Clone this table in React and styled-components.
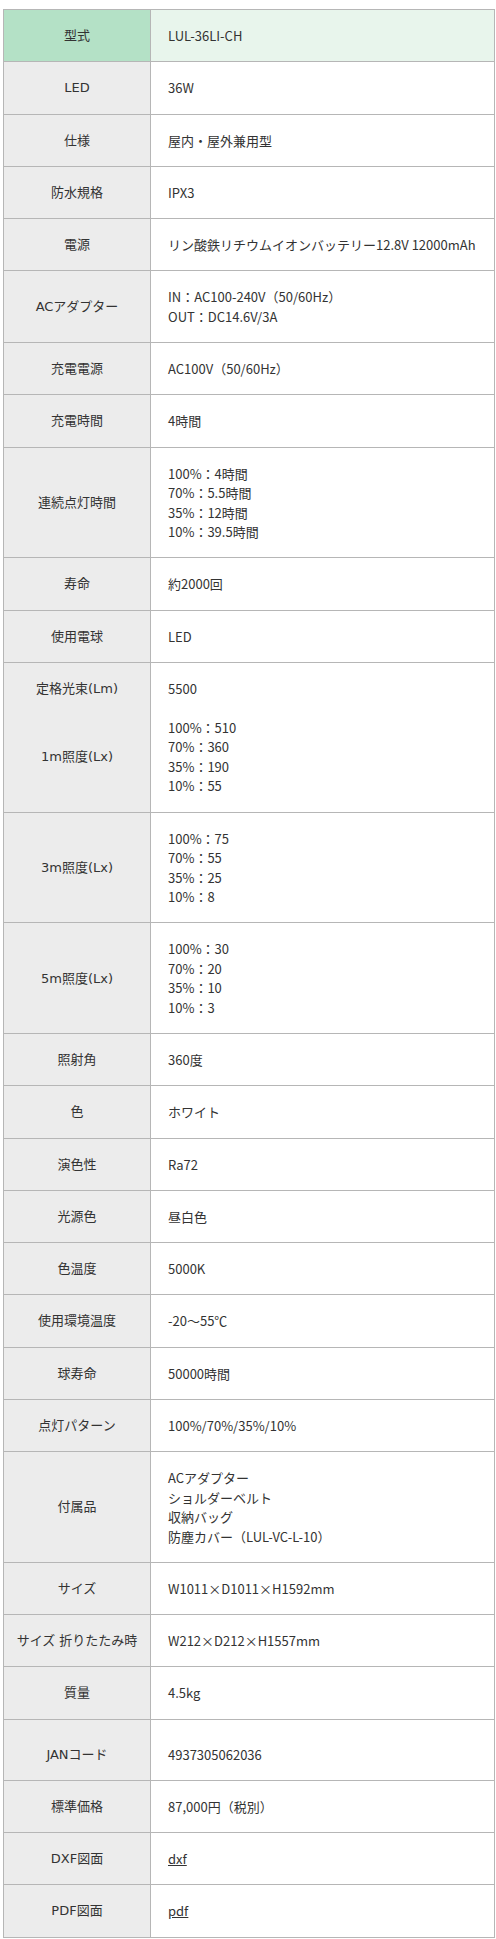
import React from "react";
import styled, { createGlobalStyle } from "styled-components";

const GlobalStyle = createGlobalStyle`
  body {
    margin: 0;
    background: #fff;
  }
`;

const specs = [
  { label: "LED", value: ["36W"] },
  { label: "仕様", value: ["屋内・屋外兼用型"] },
  { label: "防水規格", value: ["IPX3"] },
  { label: "電源", value: ["リン酸鉄リチウムイオンバッテリー12.8V 12000mAh"] },
  { label: "ACアダプター", value: ["IN：AC100-240V（50/60Hz）", "OUT：DC14.6V/3A"] },
  { label: "充電電源", value: ["AC100V（50/60Hz）"] },
  { label: "充電時間", value: ["4時間"] },
  {
    label: "連続点灯時間",
    value: ["100%：4時間", "70%：5.5時間", "35%：12時間", "10%：39.5時間"],
  },
  { label: "寿命", value: ["約2000回"] },
  { label: "使用電球", value: ["LED"] },
  {
    label: "定格光束(Lm)",
    subLabel: "1m照度(Lx)",
    value: ["5500", "", "100%：510", "70%：360", "35%：190", "10%：55"],
  },
  { label: "3m照度(Lx)", value: ["100%：75", "70%：55", "35%：25", "10%：8"] },
  { label: "5m照度(Lx)", value: ["100%：30", "70%：20", "35%：10", "10%：3"] },
  { label: "照射角", value: ["360度"] },
  { label: "色", value: ["ホワイト"] },
  { label: "演色性", value: ["Ra72"] },
  { label: "光源色", value: ["昼白色"] },
  { label: "色温度", value: ["5000K"] },
  { label: "使用環境温度", value: ["-20〜55℃"] },
  { label: "球寿命", value: ["50000時間"] },
  { label: "点灯パターン", value: ["100%/70%/35%/10%"] },
  {
    label: "付属品",
    value: ["ACアダプター", "ショルダーベルト", "収納バッグ", "防塵カバー（LUL-VC-L-10）"],
  },
  { label: "サイズ", value: ["W1011×D1011×H1592mm"] },
  { label: "サイズ 折りたたみ時", value: ["W212×D212×H1557mm"] },
  { label: "質量", value: ["4.5kg"] },
  { label: "JANコード", value: ["4937305062036"], tall: true },
  { label: "標準価格", value: ["87,000円（税別）"] },
  { label: "DXF図面", link: "dxf" },
  { label: "PDF図面", link: "pdf" },
];

const SpecTable = () => {
  return (
    <Wrapper>
      <Table>
        <colgroup>
          <col style={{ width: "147px" }} />
          <col />
        </colgroup>
        <tbody>
          <tr>
            <Label $head>型式</Label>
            <Value $head>LUL-36LI-CH</Value>
          </tr>
          {specs.map((spec) => (
            <tr key={spec.label}>
              <Label $tall={spec.tall} $top={!!spec.subLabel}>
                {spec.label}
                {spec.subLabel && <SubLabel>{spec.subLabel}</SubLabel>}
              </Label>
              <Value $tall={spec.tall}>
                {spec.link ? (
                  <FileLink href="#">{spec.link}</FileLink>
                ) : (
                  spec.value.map((line, i) => (
                    <Line key={i}>{line || "\u00a0"}</Line>
                  ))
                )}
              </Value>
            </tr>
          ))}
        </tbody>
      </Table>
    </Wrapper>
  );
};

const App = () => (
  <>
    <GlobalStyle />
    <SpecTable />
  </>
);

const Wrapper = styled.div`
  padding: 9px 1px 1px 3px;
`;

const Table = styled.table`
  width: 492px;
  table-layout: fixed;
  border-collapse: collapse;
  color: #333;
  font-size: 13px;
  line-height: 1.5;
`;

const Cell = styled.td`
  border: 1px solid #b6b6b6;
  padding: ${(p) => (p.$tall ? "25px" : "16px")} 10px 15.75px;
  vertical-align: ${(p) => (p.$top ? "top" : "middle")};
`;

const Label = styled(Cell)`
  background: ${(p) => (p.$head ? "#b4e1c6" : "#ececec")};
  text-align: center;
  font-family: "DejaVu Sans", "Noto Sans CJK JP", sans-serif;
  white-space: nowrap;
`;

const SubLabel = styled.div`
  margin-top: 49px;
`;

const Value = styled(Cell)`
  background: ${(p) => (p.$head ? "#e8f5ec" : "#fff")};
  padding-left: 17px;
  padding-right: 8px;
  font-family: "Noto Sans CJK JP", sans-serif;
`;

const Line = styled.div``;

const FileLink = styled.a`
  color: #333;
  text-decoration: underline;
`;

export default App;
